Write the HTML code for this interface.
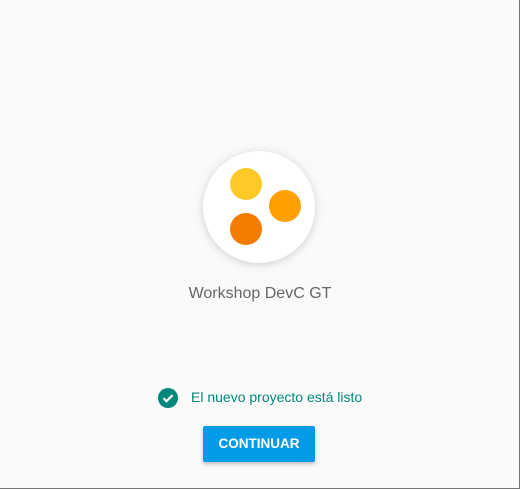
<!DOCTYPE html>
<html><head><meta charset="utf-8"><style>
html,body{margin:0;padding:0}
body{width:520px;height:489px;background:#fafafa;position:relative;overflow:hidden;font-family:"Liberation Sans",Roboto,sans-serif}
.frame{position:absolute;left:0;top:0;width:519px;height:488px;border-right:1px solid #777;border-bottom:1px solid #777;box-sizing:content-box}
.logo{position:absolute;left:203px;top:151px;width:112px;height:112px;border-radius:50%;background:#fff;box-shadow:0 2px 8px rgba(0,0,0,.12),0 0 16px rgba(0,0,0,.05)}
.dot{position:absolute;width:32px;height:32px;border-radius:50%}
.name{position:absolute;left:0;width:520px;top:285px;text-align:center;font-size:16px;color:#666}
.check{position:absolute;left:158px;top:388px}
.msg{position:absolute;left:191px;top:389px;font-size:14px;color:#00897b}
.btn{position:absolute;left:203px;top:426px;width:112px;height:36px;background:#039be5;color:#fff;font-weight:bold;font-size:13.5px;line-height:36px;text-align:center;border-radius:2px;box-shadow:0 2px 4px rgba(0,0,0,.25)}
</style></head><body>
<div class="frame"></div>
<div class="logo">
<div class="dot" style="left:27px;top:17px;background:#ffca28"></div>
<div class="dot" style="left:66px;top:39px;background:#ffa000"></div>
<div class="dot" style="left:27px;top:62px;background:#f57c00"></div>
</div>
<div class="name">Workshop DevC GT</div>
<svg class="check" width="20" height="20" viewBox="0 0 20 20"><circle cx="10" cy="10" r="10" fill="#00897b"/><path d="M5.5 10.2l3 3 6-6" fill="none" stroke="#fff" stroke-width="2.2"/></svg>
<div class="msg">El nuevo proyecto está listo</div>
<div class="btn">CONTINUAR</div>
</body></html>
